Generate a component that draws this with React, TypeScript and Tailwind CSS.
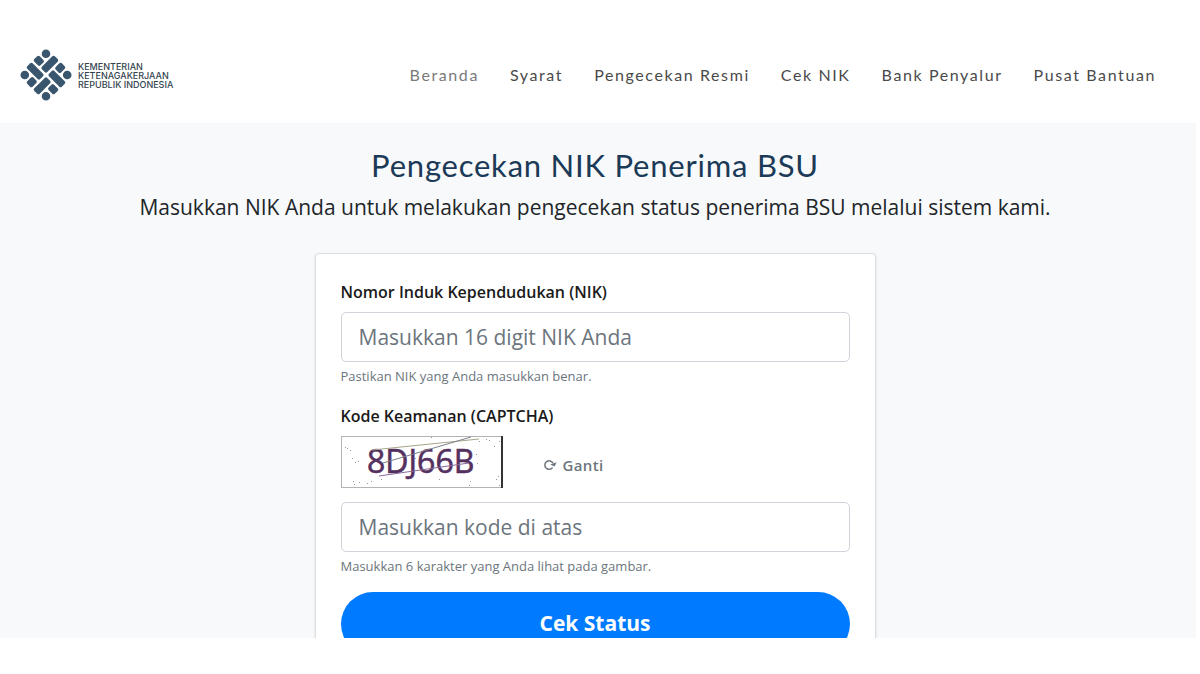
interface NavItem {
  label: string;
  active?: boolean;
}

const navItems: NavItem[] = [
  { label: 'Beranda', active: true },
  { label: 'Syarat' },
  { label: 'Pengecekan Resmi' },
  { label: 'Cek NIK' },
  { label: 'Bank Penyalur' },
  { label: 'Pusat Bantuan' },
];

const specks = [
  [4, 11], [9, 14], [11, 22], [14, 26], [17, 25], [6, 12], [12, 45], [13, 48], [18, 46], [26, 47],
  [30, 45], [40, 43], [90, 1], [135, 18], [138, 5], [148, 4], [153, 10], [158, 5], [157, 40],
  [155, 43], [158, 49], [129, 45], [128, 49], [98, 43], [145, 3], [136, 27], [74, 22],
];

function Logo() {
  return (
    <svg viewBox="-26 -26 52 52" className="size-13 shrink-0" fill="#3a566e" aria-hidden="true">
      <g transform="rotate(45)">
        <circle cx="-15" cy="-15" r="4.3" />
        <circle cx="15" cy="-15" r="4.3" />
        <circle cx="-15" cy="15" r="4.3" />
        <circle cx="15" cy="15" r="4.3" />
        {/* woven long bars */}
        <rect x="-19.5" y="1.2" width="18.3" height="7.6" rx="1.8" />
        <rect x="-8.8" y="-19.5" width="7.6" height="18.3" rx="1.8" />
        <rect x="1.2" y="-8.8" width="18.3" height="7.6" rx="1.8" />
        <rect x="1.2" y="1.2" width="7.6" height="18.3" rx="1.8" />
        {/* short ends */}
        <rect x="-19.5" y="-8.8" width="8.8" height="7.6" rx="1.8" />
        <rect x="1.2" y="-19.5" width="7.6" height="8.8" rx="1.8" />
        <rect x="10.7" y="1.2" width="8.8" height="7.6" rx="1.8" />
        <rect x="-8.8" y="10.7" width="7.6" height="8.8" rx="1.8" />
      </g>
    </svg>
  );
}

function RefreshIcon() {
  return (
    <svg viewBox="0 0 14 12" className="h-3 w-3.5" fill="none" aria-hidden="true">
      <path d="M9.6 8.6A4.3 4.3 0 1 1 10 4.2" stroke="currentColor" strokeWidth="1.5" />
      <path d="M7.2 5.6L13.6 3.2L11.6 7.6Z" fill="currentColor" />
    </svg>
  );
}

function Header() {
  return (
    <header className="flex items-center justify-between bg-white pt-[49px] pr-11 pb-[22px] pl-5">
      <a href="#" className="flex items-center gap-1.5">
        <Logo />
        <span className="font-['Inter','Liberation_Sans',sans-serif] text-[9px] leading-[9px] font-medium text-[#34444f]">
          KEMENTERIAN
          <br />
          KETENAGAKERJAAN
          <br />
          REPUBLIK INDONESIA
        </span>
      </a>
      <nav className="flex items-center gap-[31px] font-['Lato',sans-serif] text-base leading-7 tracking-widest">
        {navItems.map((item) => (
          <a key={item.label} href="#" className={item.active ? 'text-[#7a7a7a]' : 'text-[#4a4a4a]'}>
            {item.label}
          </a>
        ))}
      </nav>
    </header>
  );
}

function Captcha() {
  return (
    <svg viewBox="0 0 162 52" className="h-13 w-[162px]" role="img" aria-label="CAPTCHA">
      <rect x="0.5" y="0.5" width="161" height="51" fill="#fff" stroke="#b4b4b4" />
      <path d="M161 0V52" stroke="#333" strokeWidth="2" />
      {specks.map(([x, y]) => (
        <rect key={`${x}-${y}`} x={x} y={y} width="1" height="1" fill="#999" />
      ))}
      <text x="26" y="37" fontFamily="Open Sans" fontSize="32" fill="#54305f" stroke="#54305f" strokeWidth="0.6">
        8DJ66B
      </text>
      <path d="M31 14L138 3" stroke="#a8a58a" />
      <path d="M42 27L130 1" stroke="#7b8088" />
      <path d="M38 40L128 27" stroke="#8a6a99" />
    </svg>
  );
}

const labelClass = 'block text-base leading-6 font-semibold text-[#1a1a1a]';
const inputClass =
  'block h-[50px] w-full rounded-[5px] border border-[#ced4da] bg-white px-[17px] text-[21px] text-[#495057] placeholder:text-[#6c757d]';
const hintClass = 'mt-1 text-[13px] leading-5 text-[#6c757d]';

export default function App() {
  return (
    <div className="bg-white font-['Open_Sans',sans-serif]">
      <Header />
      <main className="mr-1 h-[calc(100vh-159px)] overflow-hidden bg-[#f7f9fb] pt-6 pr-[22px] pl-4">
        <h1 className="text-center font-['Lato',sans-serif] text-[31px] leading-9 tracking-wide text-[#1b3a57]">
          Pengecekan NIK Penerima BSU
        </h1>
        <p className="mt-2 text-center text-[21px] leading-8 text-[#212529]">
          Masukkan NIK Anda untuk melakukan pengecekan status penerima BSU melalui sistem kami.
        </p>
        <form className="mx-auto mt-[30px] max-w-[561px] rounded border border-[#dcdfe2] bg-white px-[25px] pt-[26px] pb-6 shadow-sm">
          <label htmlFor="nik" className={labelClass}>
            Nomor Induk Kependudukan (NIK)
          </label>
          <input id="nik" type="text" placeholder="Masukkan 16 digit NIK Anda" className={`mt-2 ${inputClass}`} />
          <p className={hintClass}>Pastikan NIK yang Anda masukkan benar.</p>

          <label htmlFor="captcha" className={`mt-[18px] ${labelClass}`}>
            Kode Keamanan (CAPTCHA)
          </label>
          <div className="mt-2 flex items-center gap-10">
            <Captcha />
            <button
              type="button"
              className="mt-1.5 flex items-center gap-1.5 text-[15px] font-semibold tracking-wide text-[#6c757d]"
            >
              <RefreshIcon />
              Ganti
            </button>
          </div>
          <input id="captcha" type="text" placeholder="Masukkan kode di atas" className={`mt-3.5 ${inputClass}`} />
          <p className={hintClass}>Masukkan 6 karakter yang Anda lihat pada gambar.</p>

          <button type="submit" className="mt-4 h-16 w-full rounded-full bg-[#007bff] text-[21px] font-bold text-white">
            Cek Status
          </button>
        </form>
      </main>
    </div>
  );
}
